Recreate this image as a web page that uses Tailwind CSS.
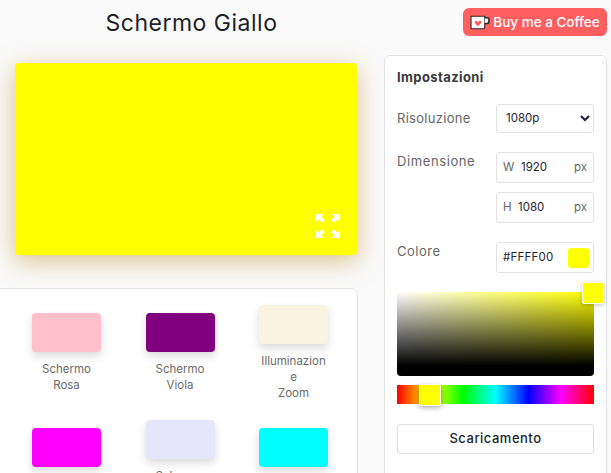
<!DOCTYPE html>
<html lang="en">
<head>
  <meta charset="UTF-8">
  <meta name="viewport" content="width=device-width, initial-scale=1.0">
  <title>Schermo Giallo</title>
  <script src="https://cdn.jsdelivr.net/npm/@tailwindcss/browser@4"></script>
</head>
<body class="bg-[#fafafa] h-[473px] overflow-hidden font-['Inter',sans-serif] text-[#1f2430]">
  <div class="flex items-start">
    <div class="w-[384px] shrink-0">
      <h1 class="mt-[8px] ml-[15px] w-[353px] text-center text-[23px] leading-[30px] tracking-[0.5px] text-[#1d1f29]">Schermo Giallo</h1>
      <div class="relative mt-[25px] ml-[15px] w-[342px] h-[192px] bg-[#ffff00] rounded-[4px] shadow-[0_6px_24px_rgba(190,140,30,0.5)]">
        <svg class="absolute left-[301px] top-[151px] w-[24px] h-[24px]" viewBox="0 0 24 24" fill="#fff">
          <path d="M0 0h8l-2.600 2.600 3.400 3.400-2.800 2.800-3.400-3.400L0 8zM24 0v8l-2.600-2.600-3.400 3.400-2.800-2.800 3.400-3.400L16 0zM0 24v-8l2.600 2.600 3.400-3.400 2.800 2.800-3.400 3.400L8 24zM24 24h-8l2.600-2.600-3.400-3.400 2.800-2.800 3.400 3.400L24 16z"/>
        </svg>
      </div>
      <div class="mt-[33px] -ml-[20px] w-[378px] pl-[51px] pr-[29px] pt-[16px] bg-white border border-[#e3e3e3] rounded-[7px] grid grid-cols-[69px_69px_69px] justify-between gap-y-[19px] items-center text-[11.5px] leading-[16px] text-[#6b6b6b] text-center">
        <div>
          <div class="h-[39px] bg-[#ffc0cb] rounded-[4px] shadow-[0_4px_8px_rgba(0,0,0,0.15)] mb-[9px]"></div>
          Schermo<br>Rosa
        </div>
        <div>
          <div class="h-[39px] bg-[#800080] rounded-[4px] shadow-[0_4px_8px_rgba(0,0,0,0.15)] mb-[9px]"></div>
          Schermo<br>Viola
        </div>
        <div>
          <div class="h-[39px] bg-[#faf3e0] rounded-[4px] shadow-[0_4px_8px_rgba(0,0,0,0.15)] mb-[9px]"></div>
          Illuminazion<br>e<br>Zoom
        </div>
        <div>
          <div class="h-[39px] bg-[#ff00ff] rounded-[4px] shadow-[0_4px_8px_rgba(0,0,0,0.15)] mb-[9px]"></div>
          Schermo<br>Magenta
        </div>
        <div>
          <div class="h-[39px] bg-[#e6e6fa] rounded-[4px] shadow-[0_4px_8px_rgba(0,0,0,0.15)] mb-[9px]"></div>
          Schermo<br>Lavanda<br>Chiaro
        </div>
        <div>
          <div class="h-[39px] bg-[#00ffff] rounded-[4px] shadow-[0_4px_8px_rgba(0,0,0,0.15)] mb-[9px]"></div>
          Schermo<br>Ciano
        </div>
      </div>
    </div>
    <div class="w-[223px] shrink-0">
      <a class="mt-[8px] ml-[79px] w-[144px] h-[28px] flex items-center justify-center gap-[3px] bg-[#ff5f5f] rounded-[6px] text-white text-[13.500px] font-medium whitespace-nowrap">
        <svg class="w-[20px] h-[15px] shrink-0" viewBox="0 0 19 14">
          <path d="M1 1h13v11a1 1 0 0 1-1 1H2a1 1 0 0 1-1-1z" fill="#fff" stroke="#2a2a2a"/>
          <path d="M14 2.500h2.500a1.500 1.500 0 0 1 1.500 1.500v2a2 2 0 0 1-2 2h-2" fill="#fff" stroke="#2a2a2a" stroke-width="1.500"/>
          <path d="M7.500 10.500 4.500 7.500V5.500h2l1 1 1-1h2v2z" fill="#ff5f5f"/>
        </svg>
        Buy me a Coffee
      </a>
      <div class="mt-[19px] h-[430px] px-[12px] pt-[12px] bg-white border border-[#e3e3e3] rounded-[6px]">
        <h2 class="text-[13px] leading-[18px] font-bold tracking-[0.4px] text-[#3a3a3a]">Impostazioni</h2>
        <div class="mt-[18px] flex items-center justify-between h-[29px]">
          <span class="text-[13px] tracking-[0.3px] text-[#666]">Risoluzione</span>
          <div class="w-[98px] h-[29px] flex items-center justify-between pl-[9px] pr-[3px] border border-[#e3e3e3] rounded-[3px] text-[11.500px]">
            1080p
            <svg class="w-[10px] h-[7px]" viewBox="0 0 10 7" fill="none" stroke="#1d2340" stroke-width="2.200"><path d="M1 1l4 4 4-4"/></svg>
          </div>
        </div>
        <div class="mt-[19px] flex justify-between">
          <span class="text-[13px] leading-[18px] tracking-[0.6px] text-[#666]">Dimensione</span>
          <div class="w-[98px]">
            <div class="h-[31px] flex items-center pl-[6px] pr-[6px] border border-[#e3e3e3] rounded-[3px] text-[11.500px]">
              <span class="text-[#666] w-[18px]">W</span>1920<span class="ml-auto text-[#666]">px</span>
            </div>
            <div class="mt-[9px] h-[31px] flex items-center pl-[6px] pr-[6px] border border-[#e3e3e3] rounded-[3px] text-[11.500px]">
              <span class="text-[#666] w-[15px]">H</span>1080<span class="ml-auto text-[#666]">px</span>
            </div>
          </div>
        </div>
        <div class="mt-[19px] flex justify-between">
          <span class="text-[13px] leading-[18px] tracking-[0.5px] text-[#666]">Colore</span>
          <div class="w-[98px] h-[31px] flex items-center justify-between pl-[6px] pr-[4px] border border-[#e3e3e3] rounded-[3px] text-[11.500px] tracking-[0.2px]">
            #FFFF00
            <span class="w-[21px] h-[20px] bg-[#ffff00] rounded-[3px]"></span>
          </div>
        </div>
        <div class="relative mt-[19px] h-[84px] rounded-[4px] bg-[#ffff00]">
          <div class="absolute inset-0 rounded-[4px] bg-linear-to-r/srgb from-white to-transparent"></div>
          <div class="absolute inset-0 rounded-[4px] bg-linear-to-t/srgb from-black from-[12%] to-transparent"></div>
          <div class="absolute -right-[10px] -top-[10px] w-[22px] h-[22px] bg-[#ffff00] border border-white rounded-[2px] shadow-[0_1px_4px_rgba(0,0,0,0.25)]"></div>
        </div>
        <div class="relative mt-[9px] h-[19px] bg-[linear-gradient(to_right,#f00,#ff0,#0f0,#0ff,#00f,#f0f,#f00)]">
          <div class="absolute left-[22px] -top-[1px] w-[22px] h-[22px] bg-[#ffff00] border border-white rounded-[2px] shadow-[0_2px_5px_rgba(0,0,0,0.3)]"></div>
        </div>
        <button class="mt-[20px] w-full h-[30px] border border-[#dedede] rounded-[3px] text-[13px] tracking-[0.5px] font-medium text-[#1d1f29]">Scaricamento</button>
      </div>
    </div>
  </div>
</body>
</html>
